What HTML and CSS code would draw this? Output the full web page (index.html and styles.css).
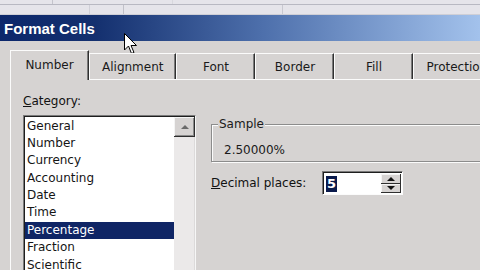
FILE: index.html
```html
<!DOCTYPE html>
<html>
<head>
<meta charset="utf-8">
<link rel="stylesheet" href="styles.css">
</head>
<body>
<div class="screen">
  <div class="sheet">
    <div class="sheet-top"><div class="cell c1"></div><div class="cell c2"></div></div>
    <div class="sheet-row"><div class="cell c3"></div><div class="cell c4"></div><div class="cell c5"></div><div class="cell c6"></div></div>
  </div>
  <div class="titlebar">Format Cells</div>
  <div class="dialog">
    <div class="tabs">
      <div class="tab active">Number</div>
      <div class="tab">Alignment</div>
      <div class="tab">Font</div>
      <div class="tab">Border</div>
      <div class="tab">Fill</div>
      <div class="tab">Protection</div>
    </div>
    <div class="panel">
      <div class="left">
        <div class="label"><u>C</u>ategory:</div>
        <div class="listbox">
          <ul class="items">
            <li>General</li>
            <li>Number</li>
            <li>Currency</li>
            <li>Accounting</li>
            <li>Date</li>
            <li>Time</li>
            <li class="selected">Percentage</li>
            <li>Fraction</li>
            <li>Scientific</li>
            <li>Text</li>
          </ul>
          <div class="scrollbar">
            <div class="sb-btn"><span class="arrow-up"></span></div>
          </div>
        </div>
      </div>
      <div class="right">
        <fieldset class="sample">
          <legend>Sample</legend>
          <div class="sample-val">2.50000%</div>
        </fieldset>
        <div class="decimal">
          <div class="dec-label"><u>D</u>ecimal places:</div>
          <div class="spin">
            <div class="spin-val"><span class="sel">5</span></div>
            <div class="spin-btns">
              <div class="spin-btn"><span class="tri-up"></span></div>
              <div class="spin-btn"><span class="tri-down"></span></div>
            </div>
          </div>
        </div>
      </div>
    </div>
  </div>
  <svg class="cursor" width="14" height="22" viewBox="0 0 14 22">
    <path d="M0.5 0.5 L0.5 17 L4.5 13 L7.5 20.5 L10 19.5 L7 12.5 L12.5 12.5 Z" fill="#fff" stroke="#000" stroke-width="1" stroke-linejoin="miter"/>
  </svg>
</div>
</body>
</html>
```

FILE: styles.css
```css
html, body {
  margin: 0;
  padding: 0;
}
body {
  width: 480px;
  height: 270px;
  overflow: hidden;
  background: #d6d3d2;
  font-family: "DejaVu Sans", Verdana, sans-serif;
  font-size: 12px;
  color: #111;
}
.screen {
  position: relative;
  width: 480px;
  height: 270px;
  overflow: hidden;
}
.sheet {
  height: 15px;
  background: #e5e4ea;
  border-bottom: 1px solid #cfcfd6;
  box-sizing: border-box;
}
.sheet-top {
  height: 4px;
  border-bottom: 1px solid #b8b8c2;
  display: flex;
}
.sheet-row {
  height: 9px;
  display: flex;
}
.cell {
  border-right: 1px solid #c4c4cc;
  box-sizing: border-box;
  height: 100%;
}
.c1 { width: 53px; }
.c2 { width: 120px; border-right-color: #d8d8de; }
.c3 { width: 90px; border-right-color: #d0d0d8; }
.c4 { width: 34px; border-right-color: #c0c0c8; }
.c5 { width: 159px; border-right-color: #c8c8d0; }
.c6 { width: 100px; border-right: none; }

.titlebar {
  box-sizing: border-box;
  height: 26px;
  line-height: 26px;
  padding: 1px 0 0 4px;
  background: linear-gradient(90deg, #0c276b 0%, #14306f 20%, #4e70ac 55%, #a3c2ec 100%);
  color: #fff;
  font-family: "Liberation Sans", Arial, sans-serif;
  font-weight: bold;
  font-size: 15px;
}

.dialog {
  padding: 9px 0 0 10px;
  width: 580px;
}
.tabs {
  display: flex;
  align-items: flex-end;
  height: 30px;
  margin-bottom: -1px;
  position: relative;
  z-index: 1;
}
.tab {
  box-sizing: border-box;
  height: 26px;
  margin-bottom: 1px;
  min-width: 79px;
  padding: 0 12px;
  text-align: center;
  line-height: 26px;
  background: #d6d3d2;
  border-top: 1px solid #fbfbfb;
  border-left: 1px solid #fbfbfb;
  border-right: 1px solid #303030;
  box-shadow: inset -1px 0 #7a7a7a;
  color: #1a1a1a;
}
.tab.active {
  height: 30px;
  margin-bottom: 0;
  line-height: 29px;
  width: 79px;
}
.panel {
  display: flex;
  align-items: flex-start;
  height: 200px;
  border-top: 1px solid #fbfbfb;
  border-left: 1px solid #fbfbfb;
  padding: 13px 0 0 12px;
}
.left {
  width: 173px;
  flex: 0 0 173px;
}
.label {
  line-height: 16px;
  height: 16px;
  margin-bottom: 6px;
}
.listbox {
  display: flex;
  box-sizing: border-box;
  height: 170px;
  background: #fff;
  border-top: 1px solid #7a7a7a;
  border-left: 1px solid #7a7a7a;
  border-right: 1px solid #f6f6f6;
  box-shadow: inset 1px 1px #1e1e1e;
  padding: 1px 0 0 1px;
}
.items {
  list-style: none;
  margin: 0;
  padding: 0.5px 0 0 0;
  flex: 1;
}
.items li {
  line-height: 17.4px;
  height: 17.4px;
  padding-left: 2px;
  color: #151515;
}
.items li.selected {
  background: #0f2565;
  color: #fff;
}
.scrollbar {
  width: 21px;
  flex: 0 0 21px;
  background: #ebe9e9;
  align-self: stretch;
  box-shadow: inset -1px 0 #dcdada;
}
.sb-btn {
  height: 20px;
  background: #d6d3d2;
  box-shadow: inset -1px -1px #2e2e2e, inset 1px 1px #f4f4f4, inset -2px -2px #8a8a8a;
  display: flex;
  align-items: center;
  justify-content: center;
}
.arrow-up {
  width: 0;
  height: 0;
  border-left: 4px solid transparent;
  border-right: 4px solid transparent;
  border-bottom: 4px solid #6a6a6a;
  margin-bottom: 1px;
}

.right {
  margin-left: 15px;
  margin-top: 24px;
  width: 320px;
}
.sample {
  margin: 0;
  padding: 11px 6px 3px 6px;
  border: 1px solid #8c8c8c;
  box-shadow: inset 1px 1px #fbfbfb, 1px 1px 0 #fbfbfb;
}
.sample legend {
  padding: 0 1px;
  line-height: 15px;
  background: #d6d3d2;
  color: #1a1a1a;
}
.sample-val {
  line-height: 15px;
  margin-left: 6px;
  color: #1a1a1a;
}
.decimal {
  display: flex;
  align-items: center;
  margin-top: 9px;
  height: 24px;
}
.dec-label {
  flex: 0 0 111px;
  line-height: 16px;
}
.spin {
  box-sizing: border-box;
  width: 81px;
  height: 24px;
  display: flex;
  background: #fff;
  border-top: 1px solid #7a7a7a;
  border-left: 1px solid #7a7a7a;
  border-bottom: 1px solid #fbfbfb;
  border-right: 1px solid #fbfbfb;
  box-shadow: inset 1px 1px #1e1e1e;
  padding: 2px 1px 1px 2px;
}
.spin-val {
  flex: 1;
  display: flex;
  align-items: center;
}
.sel {
  background: #0a1a4c;
  color: #fff;
  font-weight: bold;
  font-size: 13px;
  line-height: 16px;
  padding: 0 1px;
  margin-left: 1px;
}
.spin-btns {
  width: 20px;
  display: flex;
  flex-direction: column;
}
.spin-btn {
  flex: 1;
  background: #d6d3d2;
  box-shadow: inset -1px -1px #2e2e2e, inset 1px 1px #f4f4f4;
  display: flex;
  align-items: center;
  justify-content: center;
}
.tri-up {
  width: 0;
  height: 0;
  border-left: 4px solid transparent;
  border-right: 4px solid transparent;
  border-bottom: 4px solid #111;
}
.tri-down {
  width: 0;
  height: 0;
  border-left: 4px solid transparent;
  border-right: 4px solid transparent;
  border-top: 4px solid #111;
}
.cursor {
  position: absolute;
  left: 124px;
  top: 33px;
}
```
